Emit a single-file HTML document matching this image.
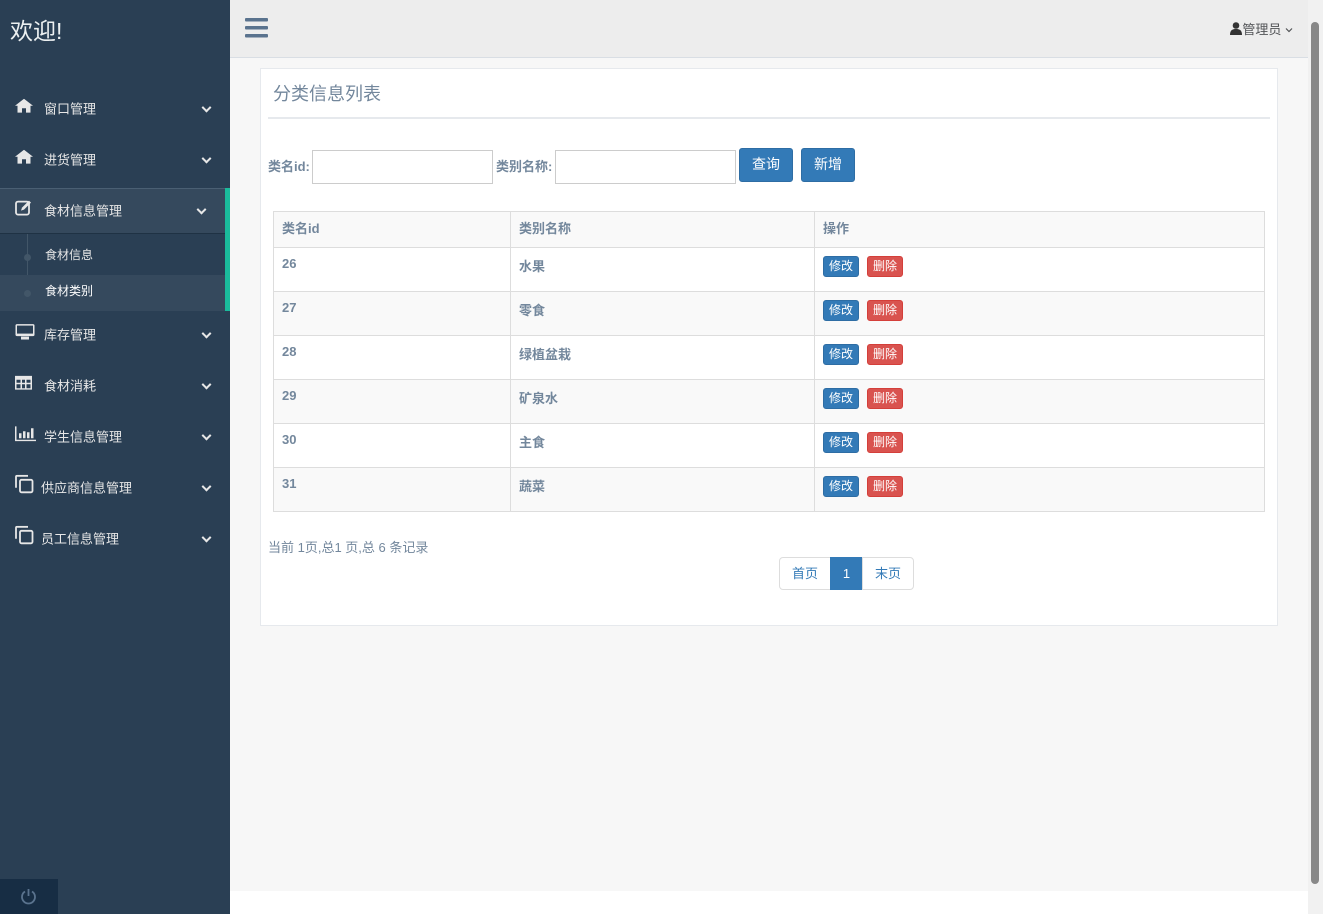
<!DOCTYPE html>
<html><head><meta charset="utf-8"><style>
*{box-sizing:border-box;margin:0;padding:0}
body{width:1323px;height:914px;overflow:hidden;background:#fff;font-family:"Liberation Sans","Noto Sans CJK SC",sans-serif;color:#73879c;font-size:13px;position:relative}
.side{position:absolute;left:0;top:0;width:230px;height:914px;background:#2a3f54;color:#ecf0f1}
.logo{position:absolute;left:10px;top:12px;font-size:23px;color:#ecf0f1}
.mi{position:absolute;left:0;width:230px;height:51px;font-size:13px;color:#e7e7e7}
.mi .ic{position:absolute;left:15px;top:50%;transform:translateY(-60%)}
.mi .t{position:absolute;left:44px;top:50%;transform:translateY(-55%)}
.mi .ch{position:absolute;right:20px;top:50%;width:7px;height:7px;border-right:2px solid #e7e7e7;border-bottom:2px solid #e7e7e7;transform:translateY(-70%) rotate(45deg)}
.top{position:absolute;left:230px;top:0;width:1078px;height:58px;background:#ededed;border-bottom:1px solid #d9dee4}
.main{position:absolute;left:230px;top:58px;width:1078px;height:833px;background:#f7f7f7}
.panel{position:absolute;left:260px;top:68px;width:1018px;height:558px;background:#fff;border:1px solid #e6e9ed}
.inp{position:absolute;height:34px;border:1px solid #ccc;background:#fff;top:150px}
.btn{position:absolute;top:148px;height:34px;background:#337ab7;border:1px solid #2e6da4;border-radius:3px;color:#fff;font-size:14px;text-align:center;line-height:31px;width:54px}
table{position:absolute;left:273px;top:211px;width:992px;border-collapse:collapse}
td,th{border:1px solid #ddd;padding:0 8px;text-align:left;vertical-align:top;font-weight:bold;font-size:13px;color:#73879c}
th{height:36px;line-height:33px;background:#f9f9f9}
td{height:44px;padding-top:8px}
tr.g td{background:#f9f9f9}
.b{display:inline-block;font-size:12px;color:#fff;padding:0 5px;height:21px;line-height:19px;border-radius:3px;font-weight:normal;margin-right:8px;margin-top:0}
.bb{background:#337ab7;border:1px solid #2e6da4}.br{background:#d9534f;border:1px solid #d43f3a}
.pg{position:absolute;top:557px;height:33px;border:1px solid #ddd;font-size:13px;line-height:31px;text-align:center;color:#337ab7;background:#fff}
</style></head><body>
<div class="side">
<div class="logo">欢迎!</div>
<div class="mi" style="top:83px"><span class="ic"><svg width="18" height="14" viewBox="0 0 18 14"><path d="M9 0L0 7h2.5v7h4.5V9.5h4V14h4.5V7H18z" fill="#e7e7e7"/></svg></span><span class="t">窗口管理</span><span class="ch"></span></div>
<div class="mi" style="top:134px"><span class="ic"><svg width="18" height="14" viewBox="0 0 18 14"><path d="M9 0L0 7h2.5v7h4.5V9.5h4V14h4.5V7H18z" fill="#e7e7e7"/></svg></span><span class="t">进货管理</span><span class="ch"></span></div>
<div style="position:absolute;top:188px;left:0;width:230px;height:123px;background:#2a3f54"></div>
<div class="mi" style="top:188px;height:46px;background:#35495d;border-top:1px solid #4a5f73;border-bottom:1px solid #1f3244"><span class="ic"><svg width="18" height="16" viewBox="0 0 18 16"><rect x="1" y="2" width="13" height="13" rx="2" fill="none" stroke="#e7e7e7" stroke-width="1.8"/><path d="M6 11l1-3 7-7 2 2-7 7z" fill="#e7e7e7"/></svg></span><span class="t">食材信息管理</span><span class="ch" style="right:25px"></span></div>
<div style="position:absolute;left:27px;top:234px;width:1px;height:77px;background:#425668"></div>
<div style="position:absolute;left:0;top:275px;width:226px;height:36px;background:#35495d"></div>
<div style="position:absolute;left:24px;top:254px;width:7px;height:7px;border-radius:50%;background:#425668"></div>
<div style="position:absolute;left:24px;top:290px;width:7px;height:7px;border-radius:50%;background:#425668"></div>
<div style="position:absolute;left:45px;top:246px;font-size:12px;color:#e7e7e7">食材信息</div>
<div style="position:absolute;left:45px;top:282px;font-size:12px;color:#fff">食材类别</div>
<div style="position:absolute;left:225px;top:188px;width:5px;height:123px;background:#1abb9c"></div>
<div class="mi" style="top:309px"><span class="ic"><svg width="20" height="16" viewBox="0 0 20 16"><rect x="0.5" y="0.5" width="19" height="12" rx="1.5" fill="#e7e7e7"/><rect x="2" y="2" width="16" height="8" fill="#2a3f54"/><rect x="6" y="13" width="8" height="3" fill="#e7e7e7"/></svg></span><span class="t">库存管理</span><span class="ch"></span></div>
<div class="mi" style="top:360px"><span class="ic"><svg width="17" height="14" viewBox="0 0 17 14"><path d="M0 0h17v14H0z" fill="#e7e7e7"/><path d="M1.5 4h4v3h-4zM7 4h3v3H7zM11.5 4h4v3h-4zM1.5 8.5h4v4h-4zM7 8.5h3v4H7zM11.5 8.5h4v4h-4z" fill="#2a3f54"/></svg></span><span class="t">食材消耗</span><span class="ch"></span></div>
<div class="mi" style="top:411px"><span class="ic"><svg width="21" height="15" viewBox="0 0 21 15"><path d="M0 0h1.5v13.5H21V15H0z M4 7h2.5v5H4zM8 5h2.5v7H8zM12 6h2.5v6H12zM16 2h2.5v10H16z" fill="#e7e7e7"/></svg></span><span class="t">学生信息管理</span><span class="ch"></span></div>
<div class="mi" style="top:462px"><span class="ic"><svg width="19" height="19" viewBox="0 0 19 19"><path d="M1 13V2a1 1 0 0 1 1-1h11" fill="none" stroke="#e7e7e7" stroke-width="1.8"/><rect x="5" y="5" width="12.5" height="12.5" rx="1.5" fill="none" stroke="#e7e7e7" stroke-width="1.8"/></svg></span><span class="t" style="left:41px">供应商信息管理</span><span class="ch"></span></div>
<div class="mi" style="top:513px"><span class="ic"><svg width="19" height="19" viewBox="0 0 19 19"><path d="M1 13V2a1 1 0 0 1 1-1h11" fill="none" stroke="#e7e7e7" stroke-width="1.8"/><rect x="5" y="5" width="12.5" height="12.5" rx="1.5" fill="none" stroke="#e7e7e7" stroke-width="1.8"/></svg></span><span class="t" style="left:41px">员工信息管理</span><span class="ch"></span></div>
<div style="position:absolute;left:0;top:879px;width:58px;height:35px;background:#172d44"><svg style="position:absolute;left:20px;top:9px" width="17" height="17" viewBox="0 0 17 17"><path d="M5 3.5A6.5 6.5 0 1 0 12 3.5" fill="none" stroke="#5a738e" stroke-width="1.8"/><path d="M8.5 1v7" stroke="#5a738e" stroke-width="1.8"/></svg></div>
</div>
<div class="top">
<svg style="position:absolute;left:15px;top:18px" width="23" height="20" viewBox="0 0 23 20"><rect y="0" width="23" height="3.5" rx="1" fill="#5a738e"/><rect y="8" width="23" height="3.5" rx="1" fill="#5a738e"/><rect y="16" width="23" height="3.5" rx="1" fill="#5a738e"/></svg>
<div style="position:absolute;right:15px;top:19px;font-size:13px;color:#515356"><svg width="12" height="13" viewBox="0 0 12 13" style="vertical-align:-1px"><circle cx="6" cy="3.5" r="3.3" fill="#333"/><path d="M0 13c0-5 2.5-6 6-6s6 1 6 6z" fill="#333"/></svg>管理员 <svg width="8" height="6" viewBox="0 0 8 6" style="vertical-align:1px"><path d="M1 1.5l3 3 3-3" fill="none" stroke="#515356" stroke-width="1.2"/></svg></div>
</div>
<div class="main"></div>
<div style="position:absolute;left:1308px;top:0;width:15px;height:914px;background:#f1f1f1"><div style="position:absolute;left:3px;top:22px;width:8px;height:862px;background:#888;border-radius:4px"></div></div>
<div class="panel"></div>
<div style="position:absolute;left:273px;top:80px;font-size:18px;color:#73879c">分类信息列表</div>
<div style="position:absolute;left:268px;top:117px;width:1002px;height:2px;background:#e6e9ed"></div>
<div style="position:absolute;left:268px;top:156px;font-weight:bold;color:#73879c">类名id:</div>
<div class="inp" style="left:312px;width:181px"></div>
<div style="position:absolute;left:496px;top:156px;font-weight:bold;color:#73879c">类别名称:</div>
<div class="inp" style="left:555px;width:181px"></div>
<div class="btn" style="left:739px">查询</div>
<div class="btn" style="left:801px">新增</div>
<table>
<tr><th style="width:237px">类名id</th><th style="width:304px">类别名称</th><th>操作</th></tr>
<tr><td>26</td><td>水果</td><td><span class="b bb">修改</span><span class="b br">删除</span></td></tr>
<tr class="g"><td>27</td><td>零食</td><td><span class="b bb">修改</span><span class="b br">删除</span></td></tr>
<tr><td>28</td><td>绿植盆栽</td><td><span class="b bb">修改</span><span class="b br">删除</span></td></tr>
<tr class="g"><td>29</td><td>矿泉水</td><td><span class="b bb">修改</span><span class="b br">删除</span></td></tr>
<tr><td>30</td><td>主食</td><td><span class="b bb">修改</span><span class="b br">删除</span></td></tr>
<tr class="g"><td>31</td><td>蔬菜</td><td><span class="b bb">修改</span><span class="b br">删除</span></td></tr>
</table>
<div style="position:absolute;left:268px;top:537px;font-size:13px;color:#73879c">当前 1页,总1 页,总 6 条记录</div>
<div class="pg" style="left:779px;width:52px;border-radius:4px 0 0 4px">首页</div>
<div class="pg" style="left:830px;width:33px;background:#337ab7;border-color:#337ab7;color:#fff">1</div>
<div class="pg" style="left:862px;width:52px;border-radius:0 4px 4px 0">末页</div>
</body></html>
